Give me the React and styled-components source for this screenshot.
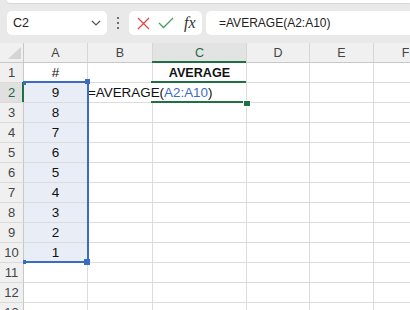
import styled, { createGlobalStyle } from 'styled-components'

const GlobalStyle = createGlobalStyle`
  html, body {
    margin: 0;
    padding: 0;
    background: #ffffff;
  }
  body {
    font-family: "Liberation Sans", Arial, sans-serif;
    overflow: hidden;
  }
`;

const columns = ['A', 'B', 'C', 'D', 'E', 'F'];

const rows = [
    { A: '#', C: 'AVERAGE' },
    { A: '9' },
    { A: '8' },
    { A: '7' },
    { A: '6' },
    { A: '5' },
    { A: '4' },
    { A: '3' },
    { A: '2' },
    { A: '1' },
    {},
    {},
    {},
];

function App() {
    return (
        <Page>
            <GlobalStyle />
            <Toolbar>
                <TopStrip />
                <FormulaRow>
                    <NameBox>
                        <span>C2</span>
                        <svg width="10" height="6" viewBox="0 0 10 6">
                            <path d="M1 1 L5 5 L9 1" fill="none" stroke="#555" strokeWidth="1.2" />
                        </svg>
                    </NameBox>
                    <Dots>
                        <i /><i /><i />
                    </Dots>
                    <IconBox>
                        <svg width="13" height="13" viewBox="0 0 13 13">
                            <path d="M1 1 L12 12 M12 1 L1 12" stroke="#e2474b" strokeWidth="1.3" />
                        </svg>
                        <svg width="16" height="12" viewBox="0 0 16 12">
                            <path d="M1 6 L5.5 10.5 L15 1" fill="none" stroke="#45a05a" strokeWidth="1.3" />
                        </svg>
                        <Fx>fx</Fx>
                    </IconBox>
                    <FormulaInput>=AVERAGE(A2:A10)</FormulaInput>
                </FormulaRow>
            </Toolbar>

            <Sheet>
                <Grid>
                    <Corner />
                    {columns.map((c) => (
                        <ColHeader key={c} active={c === 'C'}>{c}</ColHeader>
                    ))}
                    {rows.map((row, i) => {
                        const n = i + 1;
                        return [
                            <RowHeader key={`h${n}`} active={n === 2}>{n}</RowHeader>,
                            ...columns.map((c) => (
                                <Cell
                                    key={`${c}${n}`}
                                    selected={c === 'A' && n >= 2 && n <= 10}
                                    bold={c === 'C' && n === 1}
                                >
                                    {row[c]}
                                </Cell>
                            )),
                        ];
                    })}
                </Grid>

                <Editor>
                    =AVERAGE(<Ref>A2:A10</Ref>)
                </Editor>

                <GreenLine style={{ left: 152, top: 18, width: 94 }} />
                <GreenLine style={{ left: 151, top: 38, width: 95 }} />
                <GreenLine style={{ left: 151, top: 58, width: 92 }} />
                <GreenHandle />
                <RowMark />

                <RangeBox />
                <Handle small style={{ left: 23, top: 38 }} />
                <Handle style={{ left: 85, top: 36 }} />
                <Handle small style={{ left: 23, top: 217 }} />
                <Handle big style={{ left: 84, top: 216 }} />
            </Sheet>
        </Page>
    );
}

const Page = styled.div`
    width: 410px;
    height: 310px;
    overflow: hidden;
    background: #ffffff;
`;

const Toolbar = styled.div`
    height: 43px;
    background: #e9e9e9;
    display: flex;
    flex-direction: column;
`;

const TopStrip = styled.div`
    height: 3px;
    margin-left: 7px;
    background: #ffffff;
    border-bottom-left-radius: 6px;
    box-shadow: 0 1px 1px rgba(0, 0, 0, 0.08);
`;

const FormulaRow = styled.div`
    display: flex;
    align-items: center;
    height: 24px;
    margin-top: 8px;
    padding-left: 7px;
`;

const NameBox = styled.div`
    width: 100px;
    height: 24px;
    box-sizing: border-box;
    background: #ffffff;
    border-radius: 5px;
    display: flex;
    align-items: center;
    justify-content: space-between;
    padding: 0 6px 0 6px;
    font-size: 12.5px;
    color: #222;
`;

const Dots = styled.div`
    width: 22px;
    display: flex;
    flex-direction: column;
    align-items: center;
    gap: 3px;

    i {
        display: block;
        width: 2px;
        height: 2px;
        background: #444;
        border-radius: 1px;
    }
`;

const IconBox = styled.div`
    width: 73px;
    height: 24px;
    box-sizing: border-box;
    background: #ffffff;
    border-radius: 5px;
    display: flex;
    align-items: center;
    padding-left: 8px;
    gap: 8px;
`;

const Fx = styled.span`
    font-family: "Liberation Serif", "Times New Roman", serif;
    font-style: italic;
    font-size: 16px;
    color: #333;
    margin-left: 2px;
`;

const FormulaInput = styled.div`
    flex: 1;
    height: 24px;
    margin-left: 4px;
    background: #ffffff;
    border-radius: 5px 0 0 5px;
    display: flex;
    align-items: center;
    padding-left: 13px;
    font-size: 12px;
    color: #222;
`;

const Sheet = styled.div`
    position: relative;
    width: 450px;
`;

const Grid = styled.div`
    display: grid;
    grid-template-columns: 24px 64px 65px 94px 63px 64px 64px;
    grid-auto-rows: 20px;
`;

const HeaderBase = styled.div`
    box-sizing: border-box;
    background: #f0f0f0;
    display: flex;
    align-items: center;
    justify-content: center;
    font-size: 12.5px;
    color: #444;
`;

const Corner = styled(HeaderBase)`
    position: relative;
    border-right: 1px solid #c8c8c8;
    border-bottom: 1px solid #c8c8c8;

    &::after {
        content: '';
        position: absolute;
        right: 2px;
        bottom: 3px;
        width: 13px;
        height: 12px;
        background: #d4d4d4;
        clip-path: polygon(100% 0, 100% 100%, 0 100%);
    }
`;

const ColHeader = styled(HeaderBase)`
    border-right: 1px solid #d6d6d6;
    border-bottom: 1px solid #c8c8c8;
    background: ${({ active }) => (active ? '#e3e3e3' : '#f0f0f0')};
    color: ${({ active }) => (active ? '#1e6b41' : '#444')};
`;

const RowHeader = styled(HeaderBase)`
    border-right: 1px solid #c8c8c8;
    border-bottom: 1px solid #dadada;
    font-size: 13px;
    background: ${({ active }) => (active ? '#e0e0e0' : '#f0f0f0')};
    color: ${({ active }) => (active ? '#1e6b41' : '#444')};
`;

const Cell = styled.div`
    box-sizing: border-box;
    border-right: 1px solid #dcdcdc;
    border-bottom: 1px solid #dcdcdc;
    background: ${({ selected }) => (selected ? '#e9edf6' : '#ffffff')};
    display: flex;
    align-items: center;
    justify-content: center;
    font-size: ${({ bold }) => (bold ? '12.6px' : '13.5px')};
    font-weight: ${({ bold }) => (bold ? 'bold' : 'normal')};
    color: #111;
`;

const Editor = styled.div`
    position: absolute;
    left: 88px;
    top: 40px;
    width: 157px;
    height: 18px;
    background: #ffffff;
    display: flex;
    align-items: center;
    font-size: 13.4px;
    color: #111;
    white-space: nowrap;
`;

const Ref = styled.span`
    color: #3b6cc4;
`;

const GreenLine = styled.div`
    position: absolute;
    height: 2px;
    background: #1e7145;
`;

const GreenHandle = styled.div`
    position: absolute;
    left: 243px;
    top: 58px;
    width: 6px;
    height: 5px;
    background: #1e7145;
    border: 1px solid #ffffff;
    border-top: none;
`;

const RowMark = styled.div`
    position: absolute;
    left: 22px;
    top: 39px;
    width: 2px;
    height: 20px;
    background: #1e7145;
`;

const RangeBox = styled.div`
    position: absolute;
    left: 24px;
    top: 38px;
    width: 65px;
    height: 182px;
    box-sizing: border-box;
    border-top: 2px solid #3b6cc4;
    border-right: 2px solid #3b6cc4;
    border-bottom: 2px solid #3b6cc4;
`;

const Handle = styled.div`
    position: absolute;
    background: #3b6cc4;
    width: ${({ small, big }) => (small ? '3px' : big ? '6px' : '5px')};
    height: ${({ small, big }) => (small ? '4px' : big ? '6px' : '5px')};
`;

export default App
